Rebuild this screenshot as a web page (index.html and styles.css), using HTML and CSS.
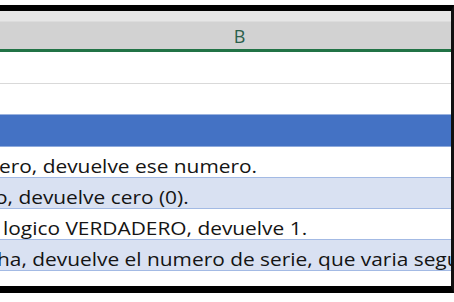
FILE: index.html
```html
<!DOCTYPE html>
<html lang="es">
<head>
    <meta charset="UTF-8">
    <title>Hoja de calculo - columna B</title>
    <link rel="stylesheet" href="styles.css">
</head>
<body>
    <div class="frame">
        <div class="strip"></div>
        <div class="col-head">B</div>

        <div class="row grid-row"></div>
        <div class="row table-top"></div>
        <div class="row table-head"></div>

        <!-- Filas de la tabla, el texto viene recortado desde la columna A -->
        <div class="row cell"><span class="txt t1">ero, devuelve ese numero.</span></div>
        <div class="row cell band"><span class="txt t2">o, devuelve cero (0).</span></div>
        <div class="row cell"><span class="txt t3">r logico VERDADERO, devuelve 1.</span></div>
        <div class="row cell band"><span class="txt t4">ha, devuelve el numero de serie, que varia según</span></div>

        <div class="tail"></div>
    </div>
</body>
</html>
```

FILE: styles.css
```css
body {
    margin: 0;
    background: #fff;
    font-family: "Open Sans", "Noto Sans", sans-serif;
}

.frame {
    width: 451px;
    margin-top: 5px;
    border-top: 6px solid #000;
    border-right: 3px solid #111;
    border-bottom: 7px solid #000;
    box-shadow: 0 4px 5px rgba(0, 0, 0, 0.35);
    overflow: hidden;
}

.strip {
    height: 10px;
    background: #e6e6e6;
    border-bottom: 1px solid #dcdcdc;
}

.col-head {
    height: 27px;
    line-height: 28px;
    background: #d2d2d2;
    border-bottom: 3px solid #217346;
    text-align: center;
    font-size: 18px;
    color: #2b5f4b;
    padding-left: 28px;
}

.row {
    height: 30px;
    white-space: nowrap;
    overflow: hidden;
}

.grid-row {
    height: 31px;
    border-bottom: 1px solid #d9d9d9;
}

.table-top {
    border-bottom: 1px solid #9bb3df;
}

.table-head {
    height: 31px;
    background: #4472c4;
    border-bottom: 1px solid #8eaadc;
}

.cell {
    border-bottom: 1px solid #a3bae4;
    font-size: 18px;
    line-height: 38px;
    color: #141414;
}

.band {
    background: #d9e1f2;
}

/* la captura sale algo estirada en horizontal */
.txt {
    display: inline-block;
    transform: scaleX(1.16);
    transform-origin: left center;
}

.t1 { margin-left: -1px; }
.t2 { margin-left: -5px; }
.t3 { margin-left: -11px; }
.t4 { margin-left: -3px; }

.tail {
    height: 15px;
}
```
